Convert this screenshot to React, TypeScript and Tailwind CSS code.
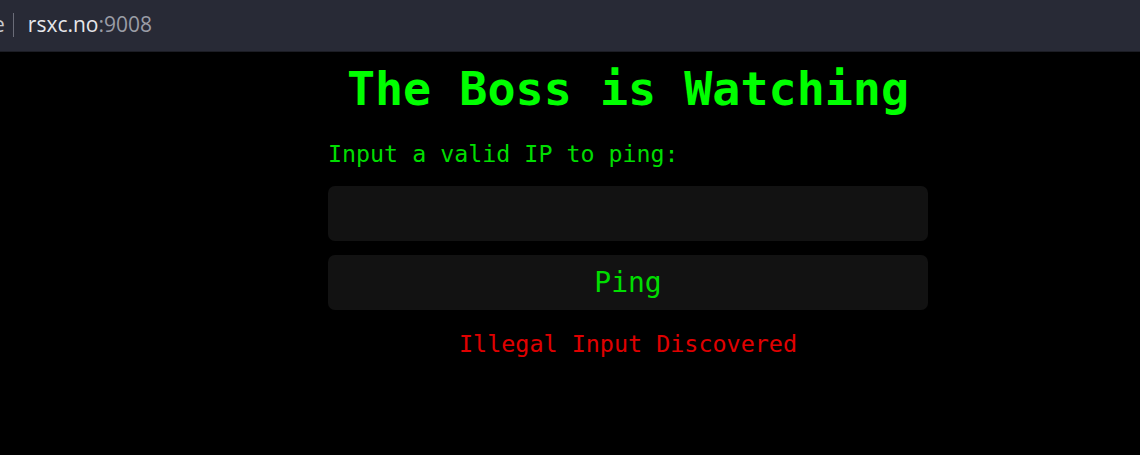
import React from "react";

export default function App() {
  return (
    <div className="w-[1140px] h-[455px] bg-black overflow-hidden flex flex-col">
      <div className="h-[52px] bg-[#282a36] flex items-center shrink-0 border-b border-[#1c1d24] pb-[2px]" style={{ fontFamily: '"Open Sans", "Noto Sans", sans-serif' }}>
        <span className="text-[21px] text-[#c8c8cc] ml-[-7px]">e</span>
        <span className="w-px h-[24px] bg-[#6a6c78] ml-[8px] mr-[14px]"></span>
        <span className="text-[21px] font-medium text-[#e6e6ea]">rsxc.no</span>
        <span className="text-[21px] text-[#9a9ca6]">:9008</span>
      </div>
      <div className="flex-1 flex justify-start pl-[328px]" style={{ fontFamily: '"DejaVu Sans Mono", monospace' }}>
        <div className="w-[600px] flex flex-col">
          <h1 className="text-[46.7px] font-bold text-[#00ff00] text-center leading-none mt-[14px]">The Boss is Watching</h1>
          <label className="text-[23.3px] text-[#00dd00] mt-[29px] leading-none">Input a valid IP to ping:</label>
          <input type="text" className="mt-[21px] h-[55px] w-full bg-[#121212] rounded-[7px] outline-none border-none text-[#00ff00]" />
          <button className="mt-[14px] h-[55px] w-full bg-[#121212] rounded-[7px] text-[28px] text-[#00dd00]" style={{ fontFamily: '"DejaVu Sans Mono", monospace' }}>Ping</button>
          <div className="mt-[23px] text-center text-[23.4px] text-[#e00000] leading-none">Illegal Input Discovered</div>
        </div>
      </div>
    </div>
  );
}
